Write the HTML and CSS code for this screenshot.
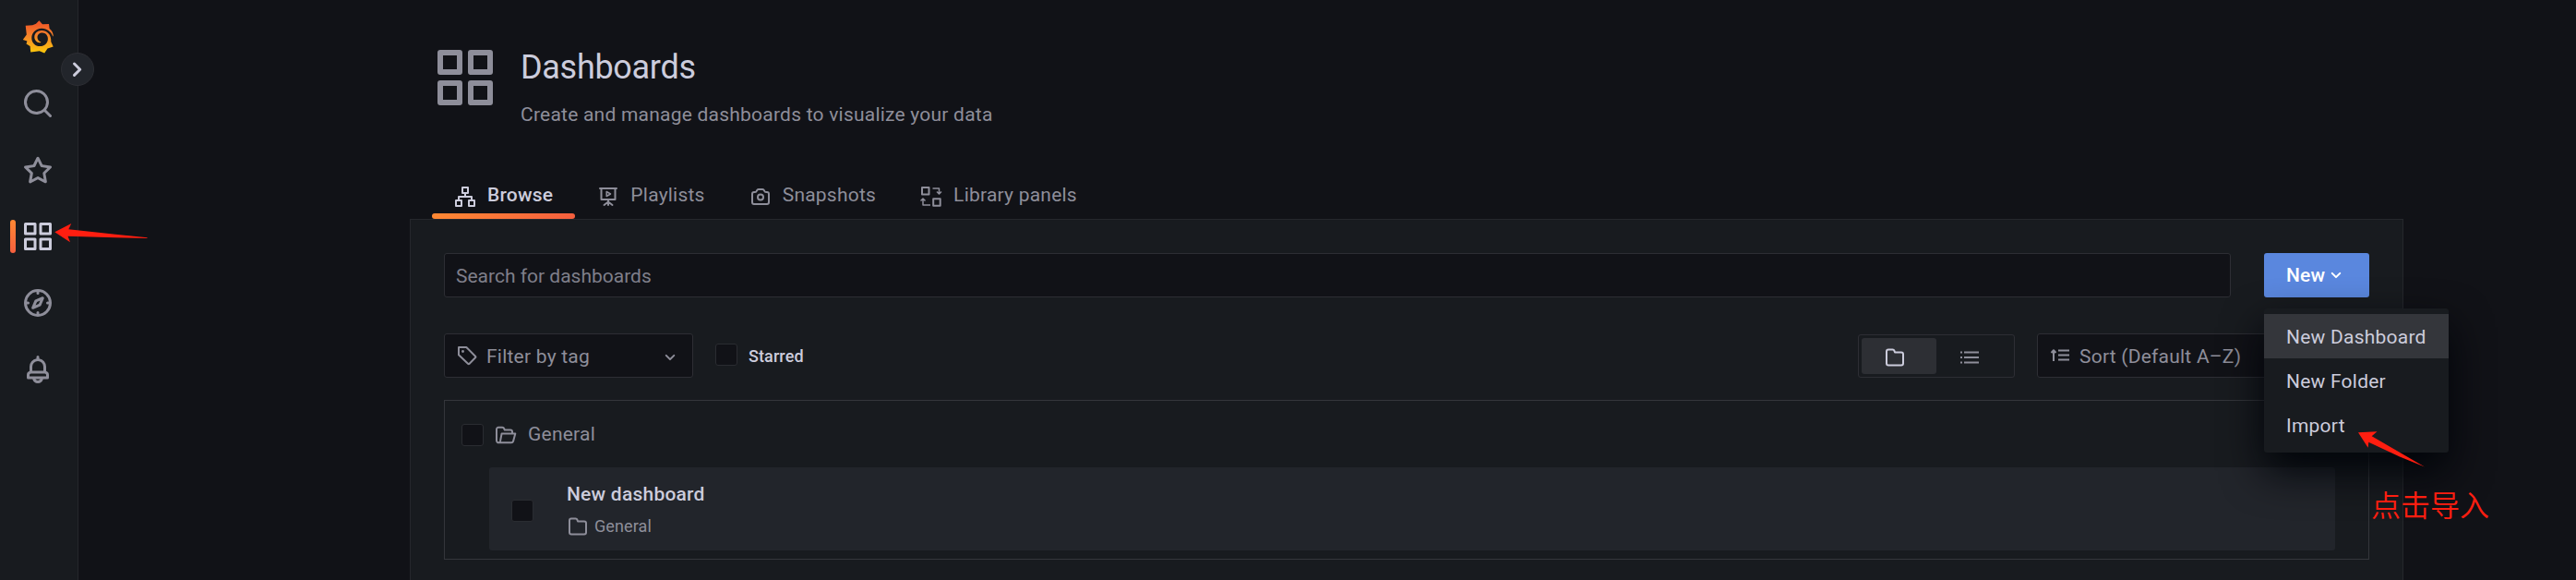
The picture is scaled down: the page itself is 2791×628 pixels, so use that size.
FILE: index.html
```html
<!DOCTYPE html>
<html lang="en">
<head>
<meta charset="utf-8">
<title>Dashboards</title>
<link rel="stylesheet" href="styles.css">
</head>
<body>
<svg class="defs" aria-hidden="true">
  <symbol id="apps" viewBox="0 0 24 24"><path d="M10,13H3a1,1,0,0,0-1,1v7a1,1,0,0,0,1,1h7a1,1,0,0,0,1-1V14A1,1,0,0,0,10,13ZM9,20H4V15H9ZM21,2H14a1,1,0,0,0-1,1v7a1,1,0,0,0,1,1h7a1,1,0,0,0,1-1V3A1,1,0,0,0,21,2ZM20,9H15V4h5Zm1,4H14a1,1,0,0,0-1,1v7a1,1,0,0,0,1,1h7a1,1,0,0,0,1-1V14A1,1,0,0,0,21,13Zm-1,7H15V15h5ZM10,2H3A1,1,0,0,0,2,3v7a1,1,0,0,0,1,1h7a1,1,0,0,0,1-1V3A1,1,0,0,0,10,2ZM9,9H4V4H9Z"/></symbol>
  <symbol id="folder" viewBox="0 0 24 24"><path d="M19,5.5H12.72l-.32-1a3,3,0,0,0-2.84-2H5a3,3,0,0,0-3,3v13a3,3,0,0,0,3,3H19a3,3,0,0,0,3-3V8.5A3,3,0,0,0,19,5.5Zm1,13a1,1,0,0,1-1,1H5a1,1,0,0,1-1-1V5.5a1,1,0,0,1,1-1H9.56a1,1,0,0,1,.95.68l.54,1.64A1,1,0,0,0,12,7.5h7a1,1,0,0,1,1,1Z"/></symbol>
  <symbol id="angle-down" viewBox="0 0 24 24"><path d="M17,9.17a1,1,0,0,0-1.41,0L12,12.71,8.46,9.17a1,1,0,0,0-1.41,0,1,1,0,0,0,0,1.42l4.24,4.24a1,1,0,0,0,1.42,0L17,10.59A1,1,0,0,0,17,9.17Z"/></symbol>
</svg>

<div class="app">
  <nav class="sidebar">
    <a class="nav-item logo">
      <svg viewBox="0 0 36 38" width="36" height="38">
        <defs><linearGradient id="flame" x1="0" y1="0" x2="0" y2="1"><stop offset=".1" stop-color="#f05a28"/><stop offset=".45" stop-color="#f5822a"/><stop offset="1" stop-color="#fbca0a"/></linearGradient></defs>
        <path fill="url(#flame)" fill-rule="evenodd" d="M18.400 1.200 L22 5.300 L29 5 L29.600 10 C32.400 12.200 33.800 15 33.800 18.200 L33.200 18.200 C31.200 13.200 26.700 9.500 21 9.700 C14.600 9.900 10.300 14.500 10.300 20 C10.300 25.400 14.200 29.100 19.200 29.100 C24.400 29.100 28 25.200 27.900 20.900 C27.800 17.200 25.200 14.700 22.100 14.600 C18.900 14.500 16.600 16.600 16.500 19.300 C16.400 21.900 18 23.900 20.400 24.500 C20.400 25.100 19.900 25.400 19 25.300 C15.700 25 13.200 22.300 13.300 19 C13.400 14.900 16.800 11.800 21.300 12 C27 12.200 31 16.500 31.200 21.600 L31.300 24.300 L33.700 29.600 L27.500 31.400 L24.200 36.600 L18.800 34.300 L9.200 35.400 L8.600 29 L4.500 26.600 L5.400 23.600 L.8 22 L4.800 16.500 L3.700 6.800 L11.200 6.200 L15 4.700 Z"/>
      </svg>
    </a>
    <a class="nav-item search"><svg class="icon" viewBox="0 0 24 24"><path d="M21.71,20.29,18,16.61A9,9,0,1,0,16.61,18l3.68,3.68a1,1,0,0,0,1.42,0A1,1,0,0,0,21.71,20.29ZM11,18a7,7,0,1,1,7-7A7,7,0,0,1,11,18Z"/></svg></a>
    <a class="nav-item"><svg class="icon" viewBox="0 0 24 24"><path d="M22,9.67A1,1,0,0,0,21.14,9l-5.69-.83L12.9,3a1,1,0,0,0-1.8,0L8.55,8.16,2.86,9a1,1,0,0,0-.81.68,1,1,0,0,0,.25,1l4.13,4-1,5.68A1,1,0,0,0,6.9,21.44L12,18.77l5.1,2.67a.93.93,0,0,0,.46.12,1,1,0,0,0,.59-.19,1,1,0,0,0,.4-1l-1-5.68,4.13-4A1,1,0,0,0,22,9.67Zm-6.15,4a1,1,0,0,0-.29.88l.72,4.2-3.76-2a1.06,1.06,0,0,0-.94,0l-3.76,2,.72-4.2a1,1,0,0,0-.29-.88l-3-3,4.21-.61a1,1,0,0,0,.76-.55L12,5.7l1.88,3.82a1,1,0,0,0,.76.55l4.21.61Z"/></svg></a>
    <a class="nav-item active"><svg class="icon"><use href="#apps"/></svg></a>
    <a class="nav-item"><svg class="icon" viewBox="0 0 24 24"><path d="M12,2A10,10,0,1,0,22,12,10,10,0,0,0,12,2Zm1,17.93V19a1,1,0,0,0-2,0v.93A8,8,0,0,1,4.07,13H5a1,1,0,0,0,0-2H4.07A8,8,0,0,1,11,4.07V5a1,1,0,0,0,2,0V4.07A8,8,0,0,1,19.93,11H19a1,1,0,0,0,0,2h.93A8,8,0,0,1,13,19.93ZM15.14,7.55l-5,2.12a1,1,0,0,0-.52.52l-2.12,5a1,1,0,0,0,.21,1.1,1,1,0,0,0,.7.29.93.93,0,0,0,.4-.08l5-2.12a1,1,0,0,0,.52-.52l2.12-5a1,1,0,0,0-1.31-1.31Zm-2.49,5.1-2.28,1,1-2.28,2.28-1Z"/></svg></a>
    <a class="nav-item"><svg class="icon" viewBox="0 0 24 24"><path d="M18,13.18V10a6,6,0,0,0-5-5.91V3a1,1,0,0,0-2,0V4.09A6,6,0,0,0,6,10v3.18A3,3,0,0,0,4,16v2a1,1,0,0,0,1,1H8.14a4,4,0,0,0,7.72,0H19a1,1,0,0,0,1-1V16A3,3,0,0,0,18,13.18ZM8,10a4,4,0,0,1,8,0v3H8Zm4,10a2,2,0,0,1-1.72-1h3.44A2,2,0,0,1,12,20Zm6-3H6V16a1,1,0,0,1,1-1H17a1,1,0,0,1,1,1Z"/></svg></a>
    <button class="toggle" aria-label="Expand"><svg viewBox="0 0 34 34" width="34" height="34"><path d="M13.500 11 L19.700 17.200 L13.500 23.400" fill="none" stroke="#ccccdc" stroke-width="3" stroke-linecap="round" stroke-linejoin="round"/></svg></button>
  </nav>

  <main class="main">
    <div class="container">
      <header class="page-header">
        <svg class="header-icon"><use href="#apps"/></svg>
        <div class="header-text">
          <h1>Dashboards</h1>
          <p>Create and manage dashboards to visualize your data</p>
        </div>
      </header>
      <div class="tabs">
        <a class="tab current"><svg class="tab-icon line" viewBox="0 0 24 24"><path d="M9 2h6v6H9zM2 16h6v6H2zM16 16h6v6h-6zM12 8v4M5 16v-4h14v4"/></svg><span>Browse</span></a>
        <a class="tab"><svg class="tab-icon line round" viewBox="0 0 24 24"><path d="M3 3h18M4.500 3v12h15V3M12 15v6M12 17.500L7.500 21M12 17.500l4.500 3.500"/><path class="fine" d="M10.200 6.500v5l4.300-2.500z"/></svg><span>Playlists</span></a>
        <a class="tab"><svg class="tab-icon line" viewBox="0 0 24 24"><path d="M5 7h1c1 0 1.500-.3 1.800-1.200l.3-.5c.3-.9.900-1.300 1.700-1.300h4.400c.8 0 1.400.4 1.700 1.300l.3.5c.3.900.8 1.200 1.800 1.200h1a2 2 0 0 1 2 2v9a2 2 0 0 1-2 2H5a2 2 0 0 1-2-2v-9a2 2 0 0 1 2-2z"/><circle cx="12" cy="12.500" r="3"/></svg><span>Snapshots</span></a>
        <a class="tab"><svg class="tab-icon line" viewBox="0 0 24 24"><path d="M2 2h7.500v7.500H2zM14.200 14.200h7.500v7.500h-7.500z"/><path class="fine" d="M13.500 3h7v6M18 6.500L20.500 9 23 6.500M11 21H3v-7M.5 16.500L3 14l2.500 2.500"/></svg><span>Library panels</span></a>
      </div>
      <section class="panel">
        <div class="search-row">
          <div class="field search-field">Search for dashboards</div>
          <div class="new-wrap">
            <button class="new-btn">New<svg class="new-caret"><use href="#angle-down"/></svg></button>
            <div class="menu">
              <a class="menu-item hover">New Dashboard</a>
              <a class="menu-item">New Folder</a>
              <a class="menu-item">Import</a>
            </div>
          </div>
        </div>
        <div class="filter-row">
          <div class="field tag-field">
            <svg class="i24 line tag-icon" viewBox="0 0 24 24"><path d="M3 3h8.300L21 12.700q.8.800 0 1.600L14.600 20.700q-.8.800-1.600 0L3 11.300z"/><circle class="dot" cx="7.500" cy="7.500" r="1.400"/></svg>
            <span>Filter by tag</span>
            <svg class="i24 tag-caret"><use href="#angle-down"/></svg>
          </div>
          <label class="starred"><i class="check"></i><span>Starred</span></label>
          <div class="radio">
            <span class="radio-opt on"><svg class="i24"><use href="#folder"/></svg></span>
            <span class="radio-opt"><svg class="i24 line" viewBox="0 0 24 24"><path d="M6 6.500h16M6 12h16M6 17.500h16M2 6.500h2M2 12h2M2 17.500h2"/></svg></span>
          </div>
          <div class="field sort-field"><svg class="i24 line" viewBox="0 0 24 24"><path d="M10 6.500H22M10 11.500H22M10 16.500H22M5 18V6.500M2.500 9L5 6.300 7.500 9"/></svg><span>Sort (Default A–Z)</span></div>
        </div>
        <div class="results">
          <div class="folder-head">
            <i class="check"></i>
            <svg class="folder-open line" viewBox="0 0 24 24"><path d="M4.500 20.300a2.300 2.300 0 0 1-2.500-2.300V5.800a2 2 0 0 1 2-2h4.300c1 0 1.600.5 1.900 1.300l.6 1.500H17a2 2 0 0 1 2 2V10M7.600 10.400H22.300L20 18.900a2 2 0 0 1-1.900 1.400H4.500c1 0 1.300-.6 1.500-1.400z"/></svg>
            <span>General</span>
          </div>
          <div class="card">
            <i class="check"></i>
            <div class="card-body">
              <div class="card-title">New dashboard</div>
              <div class="card-meta"><svg class="i24"><use href="#folder"/></svg><span>General</span></div>
            </div>
          </div>
        </div>
      </section>
    </div>
  </main>
</div>

<svg class="arrow arrow-nav" viewBox="0 0 104 24" width="104" height="24"><path fill="#ff1e10" d="M2.300 11.300 L20.300 2 L17.300 8.300 L68 13.700 L102.500 17.300 V17.900 L68 17.200 L16.500 15.700 L19 22.300 Z"/></svg>
<svg class="arrow arrow-import" viewBox="0 0 80 46" width="80" height="46"><path fill="#ff1e10" d="M3 6.300 L23.500 5.200 L17.700 10.300 L75 43.500 L48 32.500 L14.300 16.700 L13.700 22.700 Z"/></svg>
<div class="note" lang="zh">点击导入</div>
</body>
</html>
```
FILE: styles.css
```css
* { box-sizing: border-box; }
body {
  margin: 0;
  height: 628px;
  overflow: hidden;
  background: #111217;
  color: #ccccdc;
  font: 400 21px/33px Roboto, "Liberation Sans", sans-serif;
  letter-spacing: 0.225px;
}
.defs { position: absolute; width: 0; height: 0; }
svg { display: block; fill: currentColor; flex: none; }
.line { fill: none; stroke: currentColor; stroke-width: 2; stroke-linejoin: round; }
.round { stroke-linecap: round; }
.fine { stroke-width: 1.5; }
.dot { fill: currentColor; stroke: none; }
.i24 { width: 24px; height: 24px; }

.app { display: flex; height: 628px; }
.sidebar {
  position: relative;
  width: 85px;
  flex: none;
  display: flex;
  flex-direction: column;
  background: #181b1f;
  border-right: 1px solid #25272c;
  color: #8e8e9a;
}
.nav-item {
  position: relative;
  height: 72px;
  display: flex;
  align-items: center;
  padding-left: 23px;
}
.nav-item.logo { height: 76px; padding: 3px 0 0 24px; }
.nav-item .icon { width: 36px; height: 36px; }
.nav-item.active { color: #ccccdc; }
.nav-item.active::before {
  content: "";
  position: absolute;
  left: 11px;
  top: 18px;
  width: 6px;
  height: 36px;
  border-radius: 3px;
  background: linear-gradient(#ff8833, #f55f3e);
}
.toggle {
  position: absolute;
  left: 66px;
  top: 57px;
  width: 36px;
  height: 36px;
  padding: 0;
  border: 1px solid #2d2e34;
  border-radius: 50%;
  background: #22252b;
}

.main { flex: 1; padding-left: 359px; }
.container { width: 2160px; }
.page-header { display: flex; height: 192px; padding: 48px 0 0 24px; }
.header-icon { width: 72px; height: 72px; color: #8e8e9a; }
.header-text { padding: 1px 0 0 24px; }
h1 { margin: 0; font-size: 36px; line-height: 48px; font-weight: 400; letter-spacing: -0.3px; }
p { margin: 11px 0 0; color: #8e8e9a; }

.tabs { display: flex; height: 45px; padding-left: 24px; color: #8e8e9a; }
.tab { display: flex; align-items: center; padding: 0 24px 6px; }
.tab-icon { width: 24px; height: 24px; margin: 2px 12px 0 0; }
.tab span { letter-spacing: 0.225px; }
.current { position: relative; color: #ccccdc; font-weight: 500; }
.current::after {
  content: "";
  position: absolute;
  left: 0;
  right: 0;
  bottom: 0;
  height: 6px;
  border-radius: 3px;
  background: linear-gradient(90deg, #ff8833, #f55f3e);
}

.panel {
  height: 391px;
  padding: 36px 36px 0;
  background: #181b1f;
  border: 1px solid #25272c;
  border-bottom: 0;
}
.field {
  display: flex;
  align-items: center;
  height: 48px;
  background: #111217;
  border: 1px solid #2d2e34;
  border-radius: 3px;
  color: #8e8e9a;
}
.search-row { display: flex; gap: 36px; }
.search-field { flex: 1; padding: 2px 0 0 12px; color: #7f7f8a; letter-spacing: 0; }
.new-wrap { position: relative; }
.new-btn {
  display: flex;
  align-items: center;
  width: 114px;
  height: 48px;
  padding: 1px 0 0 24px;
  border: 0;
  border-radius: 3px;
  background: #5a87de;
  color: #fff;
  font: 500 21px/33px Roboto, "Liberation Sans", sans-serif;
  letter-spacing: 0.225px;
}
.new-caret { width: 24px; height: 24px; margin-bottom: 2px; }
.menu {
  position: absolute;
  z-index: 2;
  left: 0;
  top: 60px;
  width: 200px;
  height: 156px;
  padding: 6px 0;
  background: #181b1f;
  border-radius: 3px;
  box-shadow: 0 20px 45px #010409;
}
.menu-item { display: block; height: 48px; padding: 1px 0 0 24px; line-height: 48px; }
.menu-item.hover { background: #34363b; }

.filter-row { display: flex; height: 48px; margin-top: 39px; }
.tag-field { width: 270px; padding: 0 12px; }
.tag-field .tag-icon { margin-right: 9px; }
.tag-field span, .sort-field span { padding-top: 2px; }
.tag-field .tag-caret { margin: 3px 0 0 auto; }
.starred { display: flex; align-items: center; padding-left: 24px; color: #ccccdc; font-size: 18px; font-weight: 500; gap: 12px; letter-spacing: 0.1px; }
.check { display: block; flex: none; width: 24px; height: 24px; background: #111217; border: 1px solid #2a2c31; border-radius: 3px; }
.starred .check { margin-bottom: 2px; }
.radio { display: flex; width: 170px; height: 47px; margin: 1px 0 0 auto; padding: 3px; border: 1px solid #2d2e34; border-radius: 3px; color: #8e8e9a; }
.radio-opt { width: 81px; display: flex; align-items: center; border-radius: 3px; padding: 3px 0 0 24px; }
.radio-opt.on { background: #2d2f34; color: #ccccdc; }
.sort-field { width: 360px; margin-left: 24px; padding-left: 12px; gap: 9px; }

.results { height: 173px; margin-top: 24px; padding: 0 18px; border: 1px solid #34363b; }
.folder-head { display: flex; align-items: center; height: 72px; color: #8e8e9a; }
.folder-head .check { margin-top: 2px; }
.folder-open { width: 24px; height: 24px; margin: 2px 12px 0 12px; }
.card { display: flex; align-items: center; height: 90px; margin: 0 18px 0 30px; padding-left: 24px; background: #22252b; border-radius: 3px; }
.card .check { margin-top: 4px; }
.card-body { padding-left: 36px; }
.card-title { font-weight: 500; line-height: 32px; }
.card-meta { display: flex; align-items: center; height: 32px; color: #8e8e9a; font-size: 18px; line-height: 26px; gap: 6px; letter-spacing: 0.1px; }
.card-meta span { padding-top: 5px; }
.card-meta .i24 { margin-top: 6px; }

.arrow { position: absolute; z-index: 3; }
.arrow-nav { left: 57px; top: 240px; }
.arrow-import { left: 2552px; top: 462px; }
.note {
  position: absolute;
  z-index: 3;
  left: 2569px;
  top: 522px;
  color: #ff1e10;
  font: 350 32px/46px "Noto Sans CJK SC", sans-serif;
  letter-spacing: 0;
  white-space: nowrap;
}
```
